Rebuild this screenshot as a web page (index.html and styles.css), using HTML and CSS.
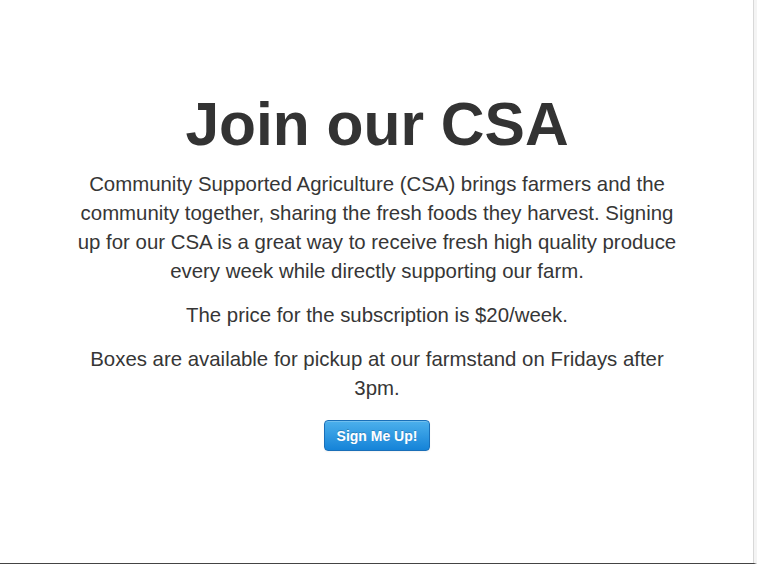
FILE: index.html
```html
<!DOCTYPE html>
<html>
<head>
<meta charset="utf-8">
<link rel="stylesheet" href="styles.css">
</head>
<body>
<div class="frame">
  <main class="hero">
    <h1 class="title">Join our CSA</h1>
    <p class="lead">Community Supported Agriculture (CSA) brings farmers and the community together, sharing the fresh foods they harvest. Signing up for our CSA is a great way to receive fresh high quality produce every week while directly supporting our farm.</p>
    <p class="lead">The price for the subscription is $20/week.</p>
    <p class="lead">Boxes are available for pickup at our farmstand on Fridays after 3pm.</p>
    <button class="btn">Sign Me Up!</button>
  </main>
</div>
</body>
</html>
```
FILE: styles.css
```css
html, body {
  margin: 0;
  padding: 0;
  background: #fff;
}
body {
  width: 757px;
  height: 564px;
  overflow: hidden;
}
.frame {
  box-sizing: border-box;
  width: 757px;
  height: 564px;
  border-right: 3px solid #f4f4f4;
  border-bottom: 1px solid #444;
  position: relative;
}
.frame::after {
  content: "";
  position: absolute;
  top: 0;
  bottom: 0;
  right: 0;
  width: 1px;
  background: #d8d8d8;
}
.hero {
  width: 606px;
  margin: 0 auto;
  padding-top: 86px;
  text-align: center;
  color: #333;
  font-family: "Liberation Sans", Arial, sans-serif;
}
.title {
  margin: 0 0 8px;
  font-size: 60.5px;
  font-weight: bold;
  line-height: 76px;
  letter-spacing: 0;
}
.lead {
  margin: 0 0 15px;
  font-size: 20.4px;
  line-height: 29px;
  font-weight: normal;
  color: #363636;
}
.btn {
  margin-top: 2px;
  width: 106px;
  height: 31px;
  border: 1px solid #1a6fb8;
  border-radius: 4px;
  background: linear-gradient(#4cb0ec, #1583d8);
  color: #fff;
  font-family: "Liberation Sans", Arial, sans-serif;
  font-weight: bold;
  font-size: 14px;
  padding: 0;
  text-shadow: 0 -1px 0 rgba(0,0,0,0.2);
  box-shadow: inset 0 1px 0 rgba(255,255,255,0.2), 0 1px 2px rgba(0,0,0,0.05);
  cursor: pointer;
}
```
